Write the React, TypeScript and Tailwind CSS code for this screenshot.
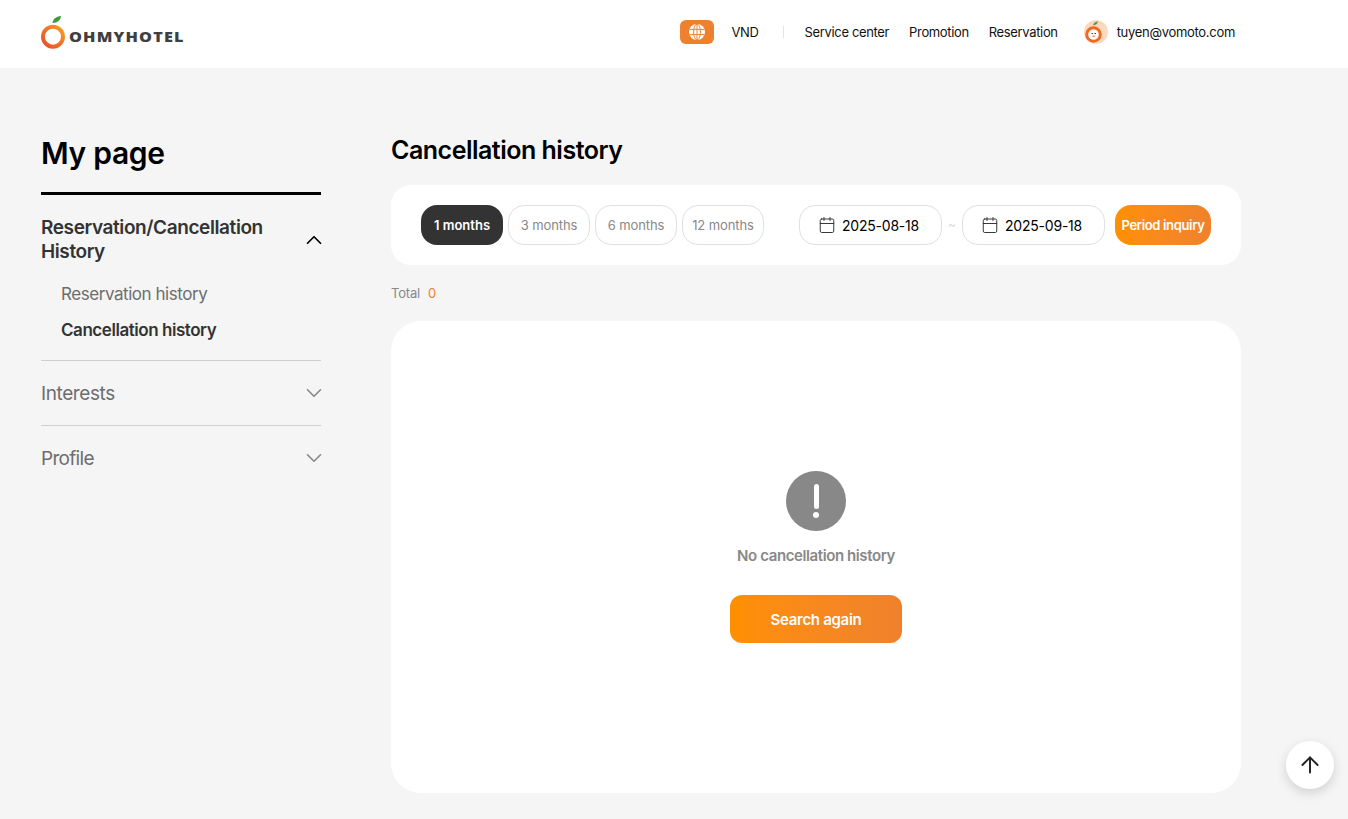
import { ArrowUp, Calendar, ChevronDown, ChevronUp } from "lucide-react";

const Logo = () => (
  <div className="flex items-center">
    <svg width="26" height="34" viewBox="0 0 26 34">
      <defs>
        <linearGradient id="ring" x1="0" y1="1" x2="1" y2="0">
          <stop offset="0" stopColor="#e8502a" />
          <stop offset="0.55" stopColor="#f0742a" />
          <stop offset="1" stopColor="#f9a21f" />
        </linearGradient>
      </defs>
      <circle cx="12" cy="21.7" r="10" fill="none" stroke="url(#ring)" strokeWidth="4" />
      <path d="M11.5 8C11.7 4.4 15 1.4 20 1C19.6 5 16.6 7.9 11.5 8Z" fill="#3f9a3c" />
    </svg>
    <span className="ml-[2px] mt-[10px] origin-left text-[14px] font-extrabold leading-none tracking-[1px] text-[#3f3f3f] font-['Open_Sans',sans-serif] [transform:scaleX(1.16)]">
      OHMYHOTEL
    </span>
  </div>
);

const Header = () => (
  <header className="flex h-[68px] items-center justify-between bg-white pb-1 pl-[41px] pr-[113px]">
    <Logo />
    <nav className="flex items-center text-[13px] tracking-[-0.35px] text-[#111]">
      <div className="flex h-6 w-[34px] items-center justify-center rounded-md bg-[#f0812c]">
        <svg width="16" height="16" viewBox="0 0 16 16" fill="none">
          <circle cx="8" cy="8" r="8" fill="white" />
          <ellipse cx="8" cy="8" rx="3.4" ry="8" stroke="#f0812c" strokeWidth="1" />
          <path d="M0.5 5.4H15.5M0.5 10.6H15.5M8 0V16" stroke="#f0812c" strokeWidth="1" />
        </svg>
      </div>
      <span className="ml-[17px] pt-0.5">VND</span>
      <span className="ml-6 h-3 w-px bg-[#dde3ea]" />
      <a className="ml-[21px] pt-0.5">Service center</a>
      <a className="ml-5 pt-0.5">Promotion</a>
      <a className="ml-5 pt-0.5">Reservation</a>
      <div className="ml-[25px] flex items-center">
        <svg width="26" height="26" viewBox="0 0 26 26">
          <circle cx="13" cy="13" r="12" fill="#fbd9bf" />
          <circle cx="10.5" cy="15.5" r="6.8" fill="white" stroke="#ee6a22" strokeWidth="3" />
          <path d="M8.5 14.5h1.4M11.5 14.5h1.4" stroke="#333" strokeWidth="1" />
          <path d="M9.5 17.2h2.4" stroke="#e8502a" strokeWidth="1" />
          <path d="M10 6.5C10.5 4 12.5 2.8 15 2.6C14.6 5 12.8 6.4 10 6.5Z" fill="#4f9f3f" />
        </svg>
        <span className="ml-2 pt-0.5 tracking-[-0.3px]">tuyen@vomoto.com</span>
      </div>
    </nav>
  </header>
);

const Sidebar = () => (
  <aside className="w-[280px] shrink-0">
    <h1 className="pt-px pb-[15px] text-[30px] font-semibold leading-[48px] tracking-[-0.3px] text-black">My page</h1>
    <div className="border-t-[3px] border-black pt-5">
      <div className="flex items-center justify-between">
        <div className="pt-px text-[19px] font-semibold leading-6 tracking-[-0.4px] text-[#333]">
          Reservation/Cancellation
          <br />
          History
        </div>
        <ChevronUp size={26} strokeWidth={1.6} className="mr-[-6px] text-black" />
      </div>
      <ul className="mt-3 pb-3 pl-5 text-[17px] leading-[36px] tracking-[-0.45px]">
        <li className="text-[#6d6d6d]">Reservation history</li>
        <li className="font-semibold text-[#333]">Cancellation history</li>
      </ul>
    </div>
    <div className="flex h-[65px] items-center justify-between border-t border-[#cfcfcf] text-[19px] tracking-[-0.4px] text-[#6d6d6d]">
      <span className="pt-0.5">Interests</span>
      <ChevronDown size={26} strokeWidth={1.5} className="mr-[-6px] text-[#888]" />
    </div>
    <div className="flex h-[65px] items-center justify-between border-t border-[#cfcfcf] text-[19px] tracking-[-0.7px] text-[#6d6d6d]">
      <span className="pt-0.5">Profile</span>
      <ChevronDown size={26} strokeWidth={1.5} className="mr-[-6px] text-[#888]" />
    </div>
  </aside>
);

const periods = ["1 months", "3 months", "6 months", "12 months"];

const DateBox = ({ value }: { value: string }) => (
  <div className="flex h-10 w-[143px] items-center justify-center gap-1.5 rounded-2xl border border-[#e0e0e0] pr-1 pt-px text-sm tracking-[-0.2px] text-black">
    <Calendar size={18} strokeWidth={1.3} className="mt-[-1px] text-[#333]" />
    {value}
  </div>
);

const FilterBar = () => (
  <div className="flex h-20 items-center rounded-[20px] bg-white px-[30px]">
    <div className="flex gap-[5px]">
      {periods.map((label, i) => (
        <button
          key={label}
          className={
            i === 0
              ? "h-10 w-[82px] rounded-2xl bg-[#333] pt-px text-[13px] font-semibold tracking-[0px] text-white"
              : "h-10 w-[82px] rounded-2xl border border-[#e0e0e0] pt-px text-[13px] tracking-[-0.1px] text-[#888]"
          }
        >
          {label}
        </button>
      ))}
    </div>
    <div className="ml-[35px] flex items-center">
      <DateBox value="2025-08-18" />
      <span className="w-5 text-center text-xs text-[#ddd]">~</span>
      <DateBox value="2025-09-18" />
    </div>
    <button className="ml-[10px] h-10 w-24 rounded-2xl bg-gradient-to-r from-[#ff9000] to-[#f0812c] pt-px text-[13px] font-semibold tracking-[-0.35px] text-white">
      Period inquiry
    </button>
  </div>
);

const EmptyState = () => (
  <div className="mt-[18px] flex h-[472px] flex-col items-center rounded-[30px] bg-white pt-[150px]">
    <div className="flex h-[60px] w-[60px] flex-col items-center justify-center rounded-full bg-[#888]">
      <span className="h-[25px] w-[5px] rounded-full bg-white" />
      <span className="mt-[3px] h-[6px] w-[6px] rounded-full bg-white" />
    </div>
    <p className="mt-[14px] text-[15px] font-semibold leading-[22px] tracking-[-0.4px] text-[#888]">No cancellation history</p>
    <button className="mt-[28px] h-12 w-[172px] rounded-xl bg-gradient-to-r from-[#ff9000] to-[#f0812c] pt-0.5 text-[15px] font-semibold tracking-[-0.3px] text-white">
      Search again
    </button>
  </div>
);

export default function App() {
  return (
    <div className="h-screen overflow-hidden bg-[#f5f5f5] font-['Inter',sans-serif]">
      <Header />
      <main className="flex gap-[70px] pl-[41px] pt-[60px]">
        <Sidebar />
        <section className="w-[850px]">
          <h2 className="text-[25px] font-semibold leading-[44px] tracking-[-0.5px] text-black">Cancellation history</h2>
          <div className="mt-[13px]">
            <FilterBar />
          </div>
          <div className="mt-[18px] flex gap-2 text-[13px] leading-[20px] tracking-[-0.2px]">
            <span className="text-[#888]">Total</span>
            <span className="text-[#f0812c]">0</span>
          </div>
          <EmptyState />
        </section>
      </main>
      <button className="fixed bottom-[30px] right-[14px] flex h-12 w-12 items-center justify-center rounded-full bg-white shadow-[0_4px_12px_rgba(0,0,0,0.15)]">
        <ArrowUp size={26} strokeWidth={1.8} className="text-[#222]" />
      </button>
    </div>
  );
}
